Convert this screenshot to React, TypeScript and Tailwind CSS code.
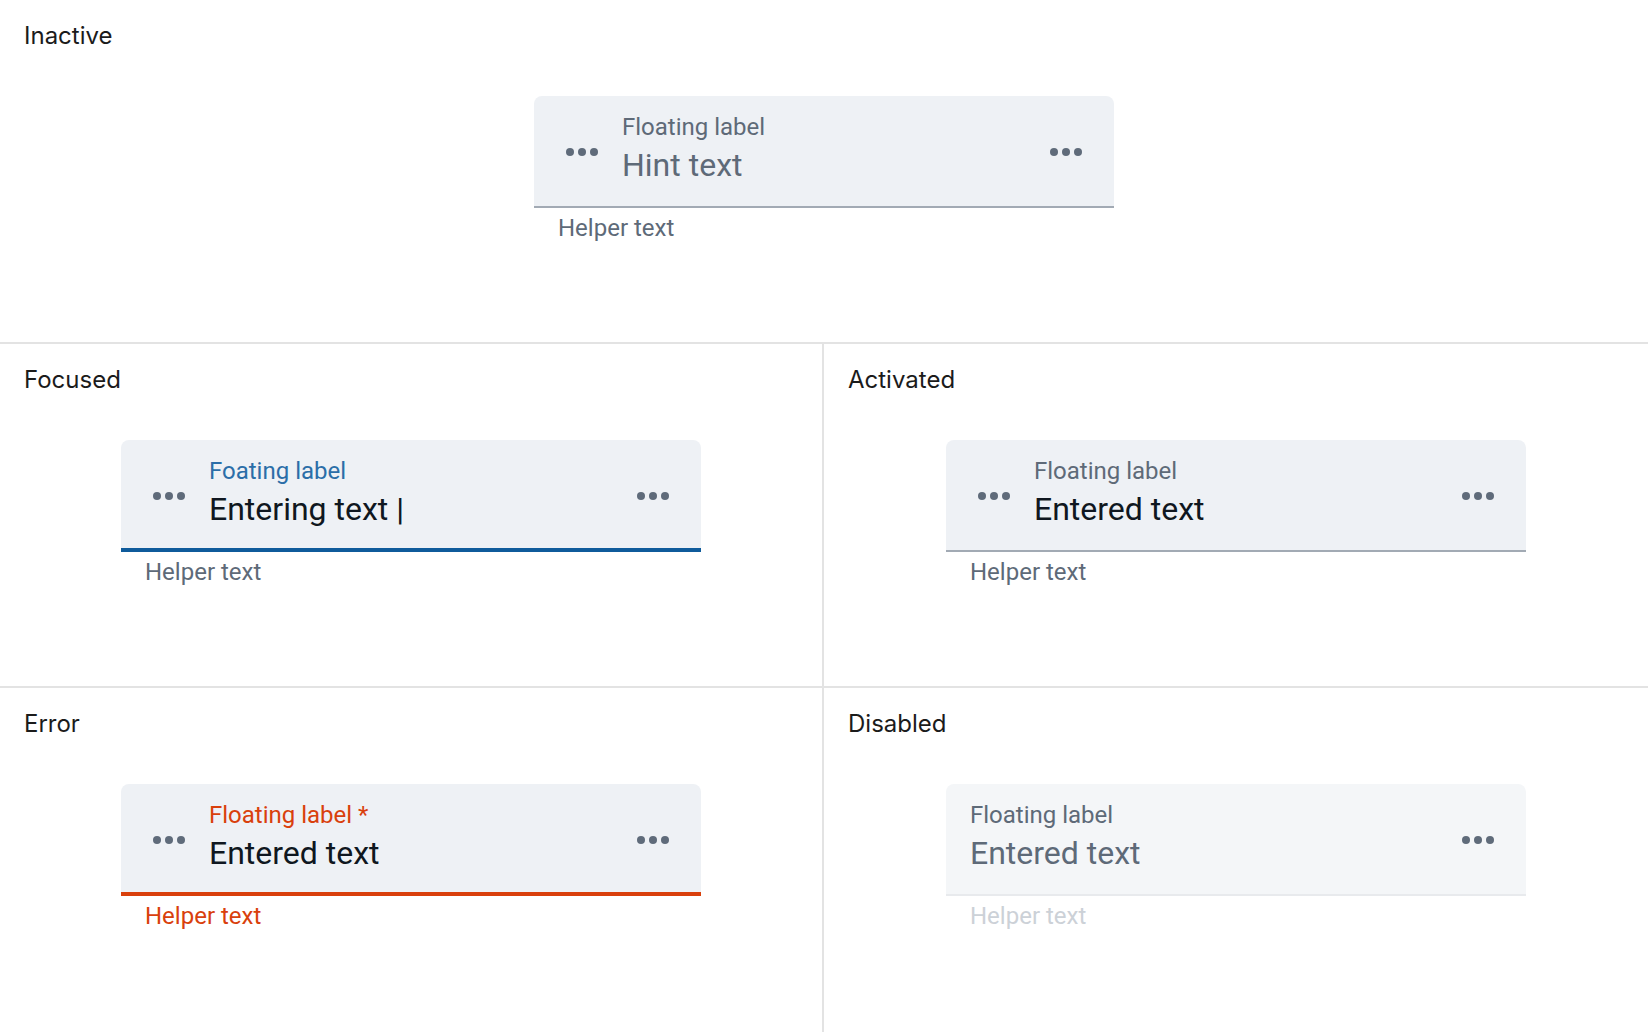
type Variant = 'inactive' | 'focused' | 'activated' | 'error' | 'disabled';

function Dots() {
  return (
    <svg width="48" height="48" viewBox="0 0 48 48" className="shrink-0">
      <circle cx="12" cy="24" r="4" fill="#5f6b7a" />
      <circle cx="24" cy="24" r="4" fill="#5f6b7a" />
      <circle cx="36" cy="24" r="4" fill="#5f6b7a" />
    </svg>
  );
}

function TextField({ variant }: { variant: Variant }) {
  const disabled = variant === 'disabled';

  const boxClass = {
    inactive: 'bg-[#eef1f5] border-b-2 border-[#a2aab4]',
    focused: 'bg-[#eef1f5] border-b-4 border-[#0f5b9b]',
    activated: 'bg-[#eef1f5] border-b-2 border-[#a2aab4]',
    error: 'bg-[#eef1f5] border-b-4 border-[#d9400c]',
    disabled: 'bg-[#f4f6f8] border-b-2 border-[#e8eaed]',
  }[variant];

  const labelClass = {
    inactive: 'text-[#5e6a78]',
    focused: 'text-[#2b6ea8]',
    activated: 'text-[#5e6a78]',
    error: 'text-[#d9400c]',
    disabled: 'text-[#5e6a78]',
  }[variant];

  const label = {
    inactive: 'Floating label',
    focused: 'Foating label',
    activated: 'Floating label',
    error: 'Floating label *',
    disabled: 'Floating label',
  }[variant];

  const value = {
    inactive: 'Hint text',
    focused: 'Entering text |',
    activated: 'Entered text',
    error: 'Entered text',
    disabled: 'Entered text',
  }[variant];

  const valueClass =
    variant === 'inactive' || disabled ? 'text-[#5e6a78]' : 'text-[#0f1720]';

  const helperClass = {
    inactive: 'text-[#5e6a78]',
    focused: 'text-[#5e6a78]',
    activated: 'text-[#5e6a78]',
    error: 'text-[#d9400c]',
    disabled: 'text-[#ccd1d7]',
  }[variant];

  return (
    <div className="w-[580px] font-['Roboto',sans-serif]">
      <div className={`h-[112px] rounded-t-lg flex items-start ${boxClass}`}>
        {!disabled && (
          <div className="ml-6 mt-8">
            <Dots />
          </div>
        )}
        <div className={`pt-[15px] ${disabled ? 'ml-6' : 'ml-4'}`}>
          <div className={`text-[24px] leading-8 ${labelClass}`}>{label}</div>
          <div className={`mt-[2px] text-[32px] leading-10 ${valueClass}`}>{value}</div>
        </div>
        <div className="ml-auto mr-6 mt-8">
          <Dots />
        </div>
      </div>
      <p className={`px-6 mt-1 text-[24px] leading-8 ${helperClass}`}>Helper text</p>
    </div>
  );
}

function Cell({ title, variant }: { title: string; variant: Variant }) {
  return (
    <div className="h-full px-6 pt-5">
      <h2 className="text-[24px] leading-8 text-[#1b1b1b] font-['Inter',sans-serif]">{title}</h2>
      <div className="mt-[44px] flex justify-center">
        <TextField variant={variant} />
      </div>
    </div>
  );
}

export default function App() {
  return (
    <div className="w-[1648px] h-[1032px] bg-white flex flex-col">
      <section className="h-[344px] border-b-2 border-[#e3e3e3]">
        <Cell title="Inactive" variant="inactive" />
      </section>
      <section className="h-[344px] border-b-2 border-[#e3e3e3] flex">
        <div className="w-[824px] border-r-2 border-[#e3e3e3]">
          <Cell title="Focused" variant="focused" />
        </div>
        <div className="flex-1">
          <Cell title="Activated" variant="activated" />
        </div>
      </section>
      <section className="flex-1 flex">
        <div className="w-[824px] border-r-2 border-[#e3e3e3]">
          <Cell title="Error" variant="error" />
        </div>
        <div className="flex-1">
          <Cell title="Disabled" variant="disabled" />
        </div>
      </section>
    </div>
  );
}
